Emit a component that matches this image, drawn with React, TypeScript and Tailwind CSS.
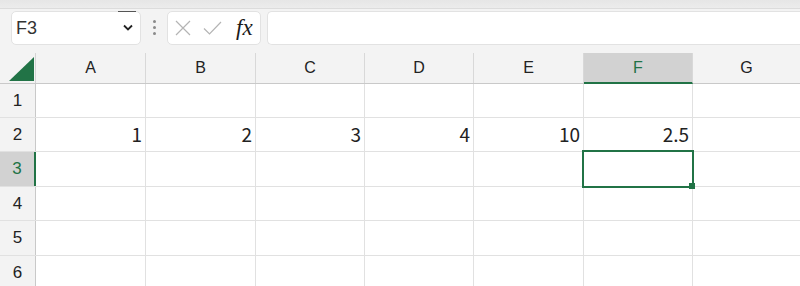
import React from "react";

const cols = ["A", "B", "C", "D", "E", "F", "G"];
const colW = [110, 110, 109, 109, 110, 109, 108];
const rowH = [34, 34, 35, 34, 35, 34];
const data: Record<string, string> = { A2: "1", B2: "2", C2: "3", D2: "4", E2: "10", F2: "2.5" };

export default function App() {
  const hdrFont = { fontFamily: '"Liberation Sans", Arial, sans-serif' };
  const cellFont = { fontFamily: '"Noto Sans CJK JP", "Noto Sans", sans-serif' };
  return (
    <div className="w-[800px] h-[286px] overflow-hidden bg-[#f3f3f3] flex flex-col" style={hdrFont}>
      <div className="h-[9px] shrink-0 bg-gradient-to-b from-[#e6e6e6] to-[#ececec] border-b border-[#dcdcdc]" />
      <div className="flex items-center h-[35px] shrink-0 mt-[1px]">
        <div className="relative ml-[11px] w-[130px] h-[34px] bg-white rounded-[5px] border border-[#e2e2e2] flex items-center justify-between pl-[4px] pr-[7px]">
          <span className="text-[18px] text-[#333] leading-none">F3</span>
          <svg width="10" height="7" viewBox="0 0 10 7"><path d="M1 1.5 L5 5.5 L9 1.5" fill="none" stroke="#222" strokeWidth="1.8" /></svg>
          <div className="absolute top-[-1px] right-[4px] w-[18px] h-[1px] bg-[#555]" />
        </div>
        <div className="w-[26px] flex flex-col items-center gap-[3px]">
          <div className="w-[3px] h-[3px] rounded-full bg-[#8a8a8a]" />
          <div className="w-[3px] h-[3px] rounded-full bg-[#8a8a8a]" />
          <div className="w-[3px] h-[3px] rounded-full bg-[#8a8a8a]" />
        </div>
        <div className="w-[94px] h-[34px] bg-white rounded-[5px] border border-[#e2e2e2] flex items-center pl-[7px]">
          <svg width="16" height="16" viewBox="0 0 16 16"><path d="M1 1 L15 15 M15 1 L1 15" stroke="#b4b4b4" strokeWidth="1.2" fill="none" /></svg>
          <svg className="ml-[12px]" width="19" height="14" viewBox="0 0 19 14"><path d="M1 7.5 L6.5 13 L18 1" stroke="#b4b4b4" strokeWidth="1.2" fill="none" /></svg>
          <span className="ml-[14px] text-[23px] italic leading-none text-[#1a1a1a]" style={{ fontFamily: '"Liberation Serif", serif' }}>fx</span>
        </div>
        <div className="ml-[6px] flex-1 h-[34px] bg-white rounded-l-[5px] border border-r-0 border-[#e2e2e2]" />
      </div>
      <div className="mt-[8px] flex flex-col">
        <div className="flex h-[31px] border-b border-[#c9c9c9]">
          <div className="w-[36px] shrink-0 border-r border-[#d4d4d4] relative">
            <svg className="absolute left-[9px] top-[4px]" width="26" height="24" viewBox="0 0 26 24"><path d="M0 24 L25 0 L25 24 Z" fill="#217346" /></svg>
          </div>
          {cols.map((c, i) => (
            <div
              key={c}
              className={`shrink-0 flex items-center justify-center text-[16px] border-r border-[#d8d8d8] ${c === "F" ? "bg-[#d2d2d2] text-[#217346] border-b-2 border-b-[#217346] -mb-[1px]" : "text-[#222]"}`}
              style={{ width: colW[i] }}
            >
              {c}
            </div>
          ))}
        </div>
        {rowH.map((h, r) => {
          const rn = r + 1;
          return (
            <div key={rn} className="flex border-b border-[#e1e1e1]" style={{ height: h }}>
              <div className={`w-[36px] shrink-0 flex items-center justify-center text-[17px] border-r ${rn === 3 ? "bg-[#d2d2d2] text-[#217346] border-r-2 border-r-[#217346]" : "bg-[#f3f3f3] text-[#222] border-[#c9c9c9]"}`}>
                {rn}
              </div>
              {cols.map((c, i) => {
                const sel = c === "F" && rn === 3;
                return (
                  <div
                    key={c}
                    className="relative shrink-0 bg-white border-r border-[#e1e1e1] flex items-end justify-end pr-[3px] pb-[2px] text-[19px] text-[#222] leading-none"
                    style={{ width: colW[i], ...cellFont }}
                  >
                    <span className="mb-[6px]">{data[c + rn] ?? ""}</span>
                    {sel && (
                      <div className="absolute left-[-2px] top-[-2px] right-[-2px] bottom-[-2px] border-2 border-[#217346] z-10">
                        <div className="absolute right-[-3px] bottom-[-3px] w-[6px] h-[6px] bg-[#217346]" />
                      </div>
                    )}
                  </div>
                );
              })}
            </div>
          );
        })}
      </div>
    </div>
  );
}
